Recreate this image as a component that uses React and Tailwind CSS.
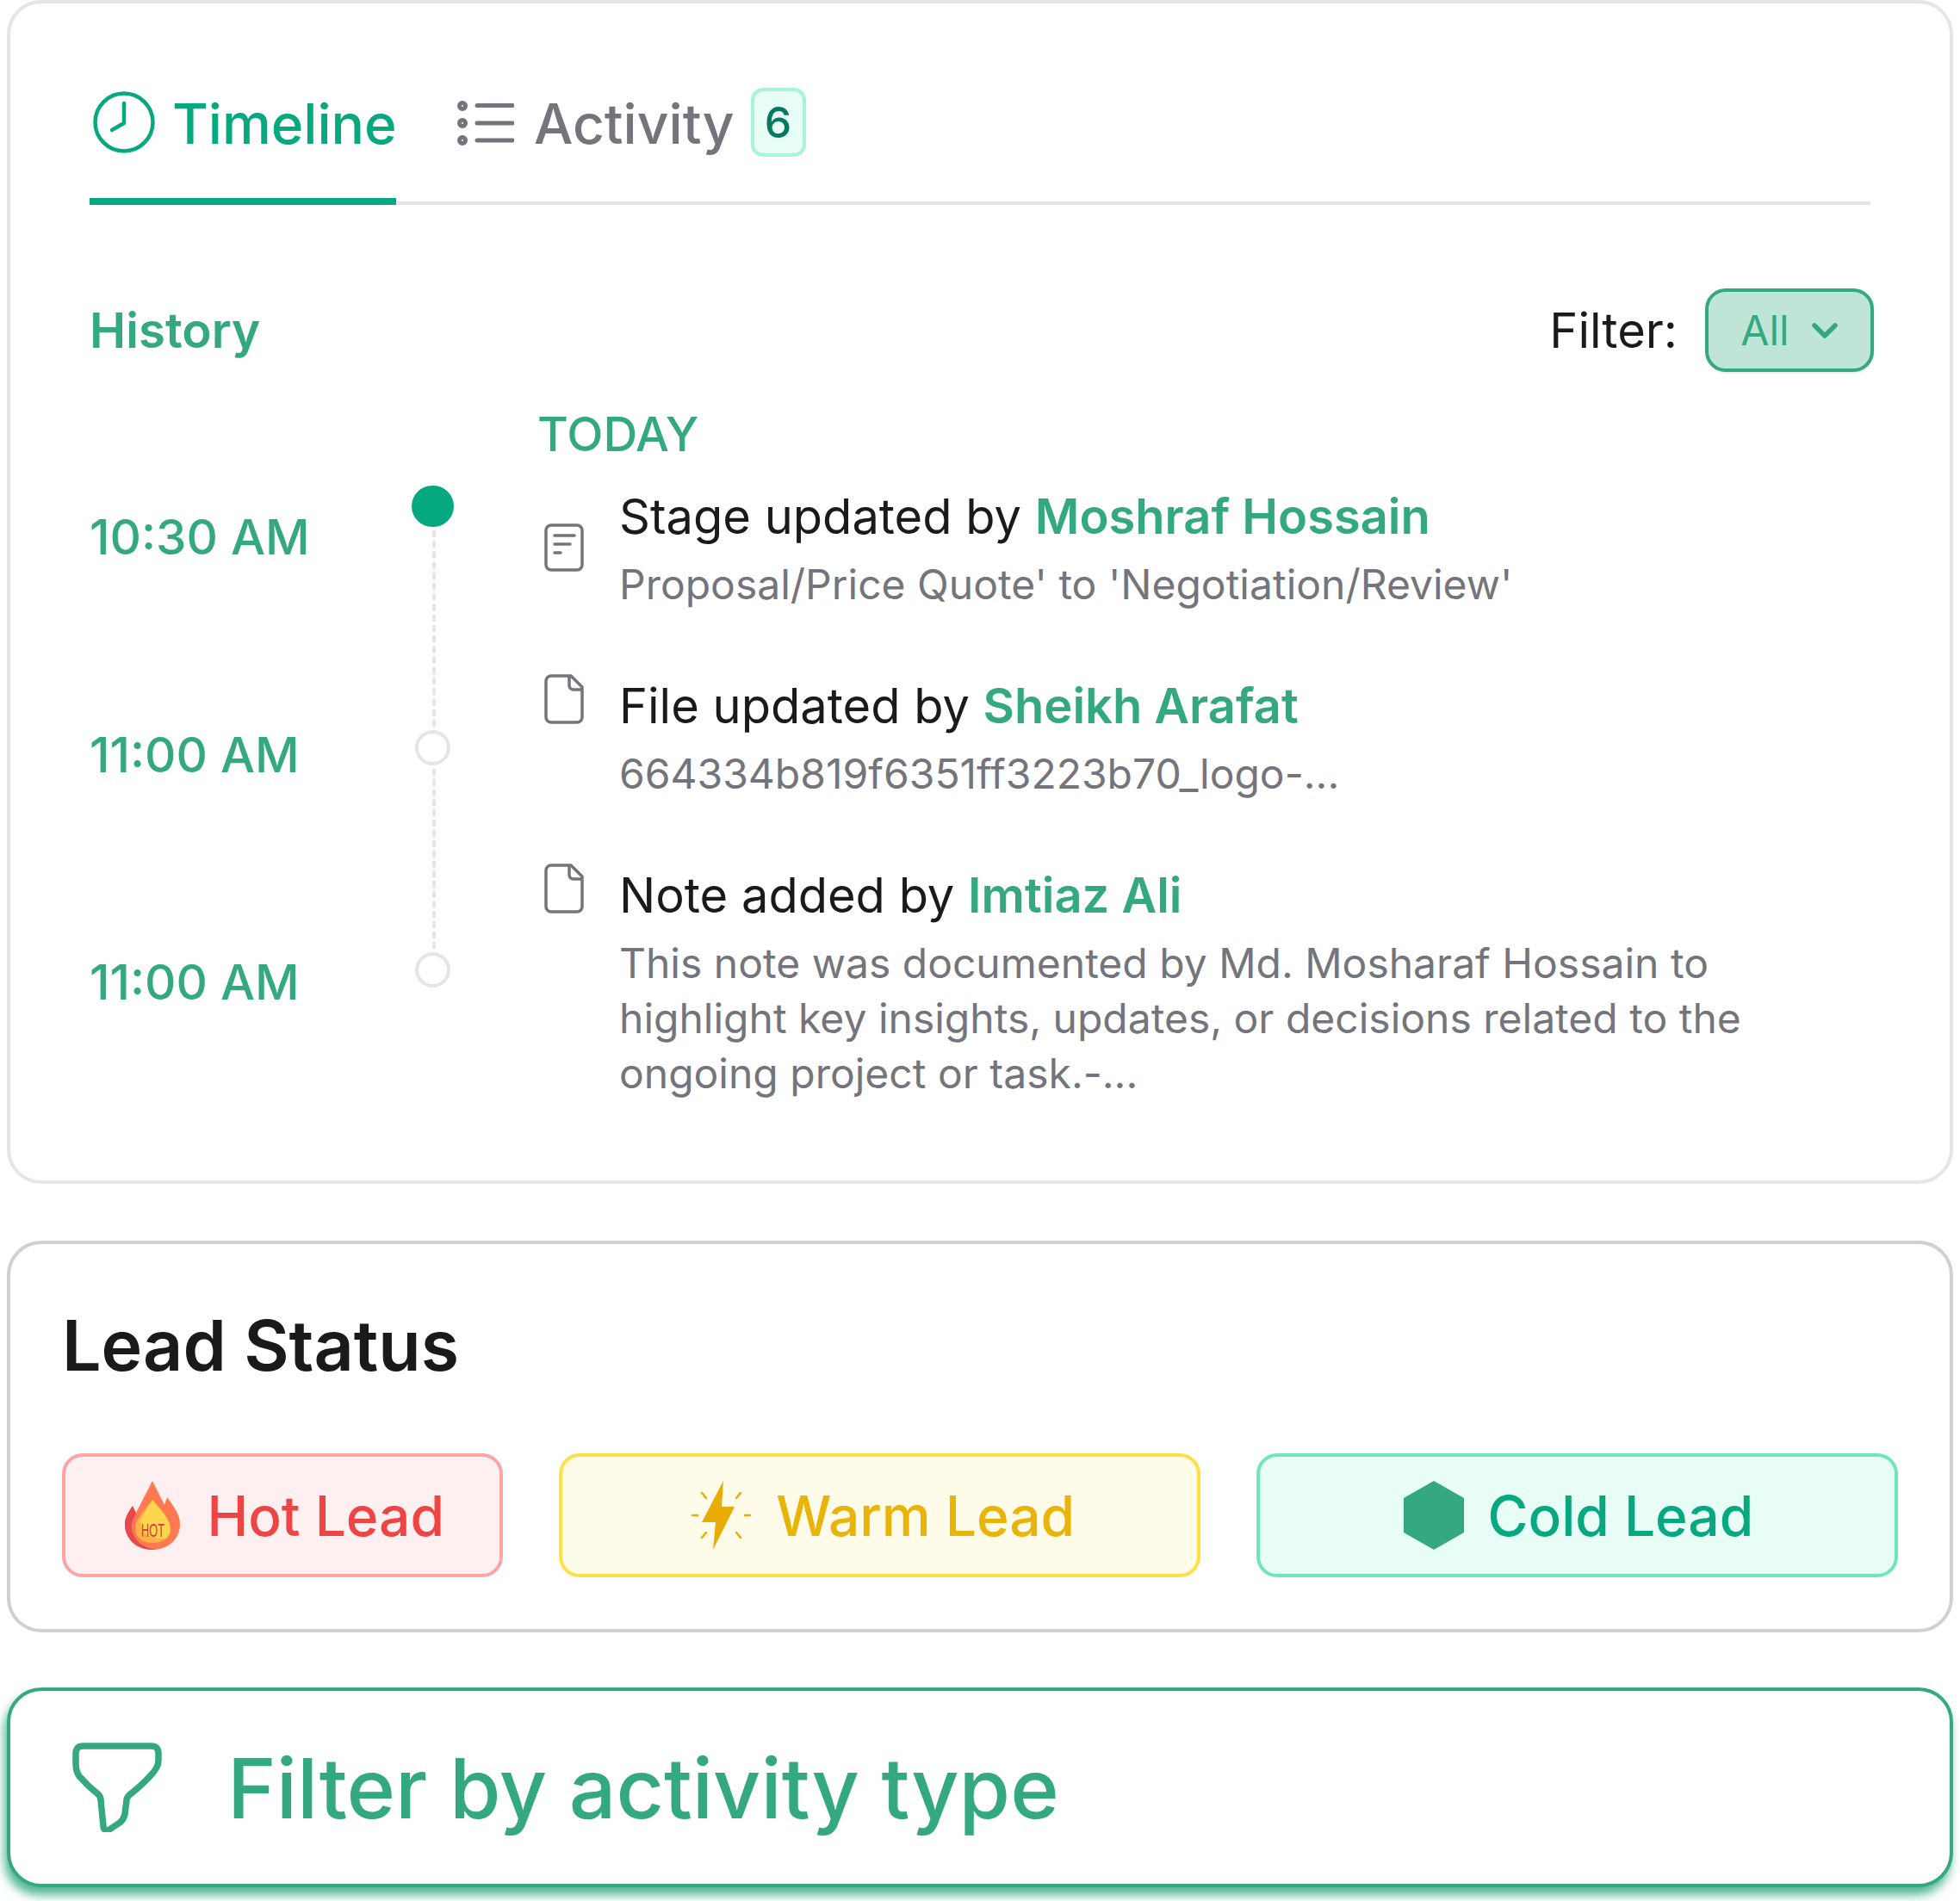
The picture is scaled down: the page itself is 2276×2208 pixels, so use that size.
import React from 'react'

const GREEN = 'text-[#34a97f]'

function ClockIcon() {
  return (
    <svg width="72" height="72" viewBox="0 0 72 72" fill="none" stroke="#06a97f" strokeWidth="4.5" strokeLinecap="round" strokeLinejoin="round">
      <circle cx="36" cy="36" r="33.5" />
      <path d="M36 14v23l-14 8" />
    </svg>
  )
}

function ListIcon() {
  return (
    <svg width="66" height="52" viewBox="0 0 66 52" fill="none" stroke="#74747c">
      <circle cx="6" cy="6" r="3.500" strokeWidth="5" fill="#fff" />
      <circle cx="6" cy="26" r="3.500" strokeWidth="5" fill="#fff" />
      <circle cx="6" cy="46" r="3.500" strokeWidth="5" fill="#fff" />
      <path d="M23 5.500h41M23 26h41M23 46h41" strokeWidth="5" strokeLinecap="round" />
    </svg>
  )
}

function NoteIcon({ className }) {
  return (
    <svg className={className} width="46" height="56" viewBox="0 0 46 56" fill="none" stroke="#74747c" strokeWidth="3.500" strokeLinecap="round">
      <rect x="2" y="2" width="42" height="52" rx="6" />
      <path d="M12 14h23M12 24h18M12 34h7" />
    </svg>
  )
}

function FileIcon({ className }) {
  return (
    <svg className={className} width="46" height="58" viewBox="0 0 46 58" fill="none" stroke="#74747c" strokeWidth="3.500" strokeLinejoin="round">
      <path d="M8 2h23l13 13v35a6 6 0 0 1-6 6H8a6 6 0 0 1-6-6V8a6 6 0 0 1 6-6z" />
      <path d="M29 2v11a5 5 0 0 0 5 5h10" />
    </svg>
  )
}

function FlameIcon() {
  return (
    <svg width="64" height="80" viewBox="0 0 64 80">
      <path d="M32 0L46 28L49 19C57 30 64 39 64 50C64 68 50 80 32 80C14 80 0 68 0 50C0 42 5 35 9 29L13 37z" fill="#ff7a50" />
      <path d="M9 29L13 38C8 46 6 53 9 61C13 71 22 78 36 80C34 80 33 80 32 80C14 80 0 68 0 50C0 42 5 35 9 29z" fill="#e5484d" />
      <path d="M32 22C41 33 53 44 53 57C53 66 43 72 32 72C21 72 12 66 12 55C12 44 24 33 32 22z" fill="#ffb347" />
      <path d="M32 22C41 33 53 44 53 57C53 62 50 65 47 67C33 68 18 62 18 46C22 38 28 28 32 22z" fill="#ffd54f" />
      <text x="32.500" y="65" textAnchor="middle" textLength="27" lengthAdjust="spacingAndGlyphs" fontSize="22" fontWeight="400" fill="#d9363e" fontFamily="Liberation Sans, sans-serif">HOT</text>
    </svg>
  )
}

function BoltIcon() {
  return (
    <svg width="69" height="80" viewBox="0 0 69 80" fill="none">
      <path d="M37 0L35 30H50L25 80L28 48H12z" fill="#e9ab05" />
      <path d="M12 14l5 6M57 14l-5 6M1 40h6M62 40h6M12 66l5-6M57 66l-5-6" stroke="#e9ab05" strokeWidth="2.500" strokeLinecap="round" />
    </svg>
  )
}

function LeadButton({ className, icon, label, gap, width }) {
  return (
    <div className={`flex h-[144px] items-center justify-center rounded-[24px] border-4 ${width} ${gap} ${className}`}>
      {icon}
      <span className="mt-[2px] text-[64px] font-medium leading-none">{label}</span>
    </div>
  )
}

function HistoryItem({ icon, action, name, children, extra }) {
  return (
    <div className={`flex gap-[41px] pl-[8px] ${extra}`}>
      {icon}
      <div>
        <p className="text-[56px] leading-[60px] text-[#1a1a1a]">
          {action} <span className={`font-semibold ${GREEN}`}>{name}</span>
        </p>
        <p className="mt-[17px] text-[48px] leading-[64px] text-[#74747c]">{children}</p>
      </div>
    </div>
  )
}

export default function App() {
  return (
    <div className="flex h-[2208px] w-[2276px] flex-col bg-white px-[8px] font-['Inter',sans-serif]">
      {/* Timeline card */}
      <div className="h-[1375px] rounded-[40px] border-4 border-[#e5e5e7] px-[92px] pt-[96px]">
        <div className="flex h-[138px] border-b-4 border-[#e5e5e8] items-start">
          <div className="-mb-1 flex h-[138px] w-[356px] items-start gap-[20px] border-b-8 border-[#06a97f] pl-1">
            <div className="mt-[6px]"><ClockIcon /></div>
            <span className="mt-[2px] text-[64px] font-medium leading-[84px] text-[#06a97f]">Timeline</span>
          </div>
          <div className="ml-[71px] flex items-start">
            <div className="mt-[17px]"><ListIcon /></div>
            <span className="ml-[23px] mt-[2px] text-[64px] font-medium leading-[84px] text-[#74747c]">Activity</span>
            <span className="ml-[19px] mt-[2px] flex h-[80px] w-[64px] items-center justify-center rounded-[14px] border-4 border-[#a9f4d6] bg-[#e8fdf5] text-[50px] font-medium text-[#047a5f]">6</span>
          </div>
        </div>

        <div className="mt-[97px] flex h-[97px] items-center justify-between pr-0">
          <span className={`mt-[2px] text-[56.5px] font-semibold ${GREEN}`}>History</span>
          <div className="-mr-1 flex items-center gap-[32px]">
            <span className="text-[56px] text-[#1a1a1a]">Filter:</span>
            <div className="flex h-[97px] w-[196px] items-center justify-center gap-[25px] rounded-[24px] border-4 border-[#34a97f] bg-[#bfe5d6] shadow-sm">
              <span className={`text-[48px] ${GREEN}`}>All</span>
              <svg width="32" height="22" viewBox="0 0 32 22" fill="none" stroke="#34a97f" strokeWidth="5.500" strokeLinecap="round" strokeLinejoin="round">
                <path d="M4 5l12 12L28 5" />
              </svg>
            </div>
          </div>
        </div>

        <div className="mt-[42px] flex">
          <div className={`w-[374px] text-[56.5px] font-medium leading-[60px] ${GREEN}`}>
            <p className="mt-[120px]">10:30 AM</p>
            <p className="mt-[193px]">11:00 AM</p>
            <p className="mt-[204px]">11:00 AM</p>
          </div>

          <div className="flex w-[49px] flex-col items-center pt-[90px]">
            <div className="h-[48px] w-[49px] rounded-full bg-[#06a97f]" />
            <div className="my-1 ml-[3px] h-[228px] border-l-4 border-dashed border-[#e5e5e8]" />
            <div className="h-[41px] w-[41px] rounded-full border-4 border-[#e5e5e8]" />
            <div className="my-1 ml-[3px] h-[209px] border-l-4 border-dashed border-[#e5e5e8]" />
            <div className="h-[41px] w-[41px] rounded-full border-4 border-[#e5e5e8]" />
          </div>

          <div className="ml-[97px] flex-1">
            <p className={`text-[55px] font-medium leading-[60px] ${GREEN}`}>TODAY</p>
            <div className="mt-[36px]">
              <HistoryItem icon={<NoteIcon className="mt-[38px] shrink-0" />} action="Stage updated by" name="Moshraf Hossain">
                Proposal/Price Quote' to 'Negotiation/Review'
              </HistoryItem>
              <HistoryItem extra="mt-[79px]" icon={<FileIcon className="-mt-[7px] shrink-0" />} action="File updated by" name="Sheikh Arafat">
                664334b819f6351ff3223b70_logo-...
              </HistoryItem>
              <HistoryItem extra="mt-[79px]" icon={<FileIcon className="-mt-[7px] shrink-0" />} action="Note added by" name="Imtiaz Ali">
                This note was documented by Md. Mosharaf Hossain to highlight key insights, updates, or decisions related to the ongoing project or task.-...
              </HistoryItem>
            </div>
          </div>
        </div>
      </div>

      {/* Lead status card */}
      <div className="mt-[66px] h-[455px] rounded-[40px] border-4 border-[#d0d0d0] px-[60px] pt-[73px]">
        <h2 className="text-[80.7px] font-semibold leading-[90px] text-[#1a1a1a]">Lead Status</h2>
        <div className="mt-[80px] flex gap-[65px]">
          <LeadButton className="border-[#fca5a5] bg-[#fef0f0] pl-[4px] text-[#ef4444]" width="w-[513px]" gap="gap-[32px]" icon={<FlameIcon />} label="Hot Lead" />
          <LeadButton className="border-[#fde047] bg-[#fefce8] pl-[8px] text-[#eab308]" width="w-[745px]" gap="gap-[29px]" icon={<BoltIcon />} label="Warm Lead" />
          <LeadButton className="border-[#6ee7b7] bg-[#e8fdf5] pl-[3px] text-[#06a97f]" width="w-[746px]" gap="gap-[28px]" icon={
            <svg width="70" height="80" viewBox="0 0 70 80"><path d="M35 0L70 20V60L35 80L0 60V20z" fill="#34a97f" /></svg>
          } label="Cold Lead" />
        </div>
      </div>

      {/* Filter card */}
      <div className="mt-[64px] flex h-[232px] items-center rounded-[40px] border-4 border-[#34a97f] bg-white pl-[72px] shadow-[-3px_9px_12px_rgba(52,169,127,0.85)]">
        <svg width="104" height="104" viewBox="0 0 104 104" fill="none" stroke="#34a97f" strokeWidth="7.500" strokeLinejoin="round" strokeLinecap="round">
          <path d="M12 4h80c5 0 8 3 8 8v8c0 7-3 11-8 17c-9 10-17 17-26 24c-2 2-3 3-3 6l-2 16c-1 5-2 7-6 10l-12 8c-4 2-7 0-7-4l-3-30c0-3-1-5-3-7C21 53 14 46 8 39C5 35 4 30 4 24V12c0-5 3-8 8-8z" />
        </svg>
        <span className={`ml-[76px] mt-[2px] text-[96.3px] font-medium leading-none ${GREEN}`}>Filter by activity type</span>
      </div>
    </div>
  )
}
